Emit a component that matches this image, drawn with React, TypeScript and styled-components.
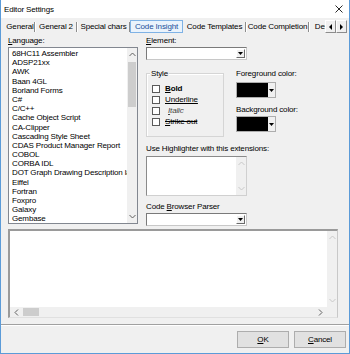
import type { FC, ReactNode } from 'react';
import styled, { createGlobalStyle, css } from 'styled-components';

const GlobalStyle = createGlobalStyle`
  html, body {
    margin: 0;
    padding: 0;
    background: #f0f0f0;
  }
  body {
    font-family: "Liberation Sans", Arial, sans-serif;
    font-size: 8px;
    letter-spacing: -0.15px;
    color: #000;
  }
`;

const languages = [
  '68HC11 Assembler',
  'ADSP21xx',
  'AWK',
  'Baan 4GL',
  'Borland Forms',
  'C#',
  'C/C++',
  'Cache Object Script',
  'CA-Clipper',
  'Cascading Style Sheet',
  'CDAS Product Manager Report',
  'COBOL',
  'CORBA IDL',
  'DOT Graph Drawing Description language',
  'Eiffel',
  'Fortran',
  'Foxpro',
  'Galaxy',
  'Gembase',
];

const tabs = [
  { label: 'General', width: 30 },
  { label: 'General 2', width: 42 },
  { label: 'Special chars', width: 53 },
  { label: 'Code Insight', width: 53, active: true },
  { label: 'Code Templates', width: 63 },
  { label: 'Code Completion', width: 63 },
  { label: 'Desktop', width: 40 },
];

type Dir = 'up' | 'down' | 'left' | 'right';

const chevronPoints: Record<Dir, string> = {
  up: '0.5,4 3.5,1 6.5,4',
  down: '0.5,1 3.5,4 6.5,1',
  left: '4,0.5 1,3.5 4,6.5',
  right: '1,0.5 4,3.5 1,6.5',
};

const Chevron: FC<{ readonly dir: Dir; readonly disabled?: boolean }> = ({
  dir,
  disabled = false,
}) => {
  const horizontal = dir === 'left' || dir === 'right';
  return (
    <svg
      width={horizontal ? 5 : 7}
      height={horizontal ? 7 : 5}
      viewBox={horizontal ? '0 0 5 7' : '0 0 7 5'}
    >
      <polyline
        points={chevronPoints[dir]}
        fill="none"
        stroke={disabled ? '#c8c8c8' : '#606060'}
        strokeWidth={1}
      />
    </svg>
  );
};

const Triangle: FC<{ readonly dir: 'down' | 'left' | 'right' }> = ({ dir }) => {
  const pts = { down: '0,0 5,0 2.5,3', left: '3,0 3,6 0,3', right: '0,0 0,6 3,3' }[dir];
  return (
    <svg width={dir === 'down' ? 5 : 3} height={dir === 'down' ? 3 : 6}>
      <polygon points={pts} fill="#000" />
    </svg>
  );
};

const VScrollBar: FC<{ readonly disabled?: boolean; readonly thumb?: boolean }> = ({
  disabled = false,
  thumb = false,
}) => (
  <VScroll>
    <ArrowCell>
      <Chevron dir="up" disabled={disabled} />
    </ArrowCell>
    <Track>{thumb && <VThumb />}</Track>
    <ArrowCell>
      <Chevron dir="down" disabled={disabled} />
    </ArrowCell>
  </VScroll>
);

const ComboBox: FC<{ readonly width: number }> = ({ width }) => (
  <Combo style={{ width }}>
    <ComboField />
    <DropButton>
      <Triangle dir="down" />
    </DropButton>
  </Combo>
);

const ColorPicker: FC = () => (
  <ColorButton>
    <Swatch />
    <ColorArrow>
      <Triangle dir="down" />
    </ColorArrow>
  </ColorButton>
);

const CheckRow: FC<{ readonly children: ReactNode }> = ({ children }) => (
  <CheckLine>
    <CheckBox />
    {children}
  </CheckLine>
);

export default function App() {
  return (
    <>
      <GlobalStyle />
      <Window>
        <TitleBar>
          <Title>Editor Settings</Title>
          <svg width="8" height="8" viewBox="0 0 8 8">
            <path d="M0.5 0.5 L7.5 7.5 M7.5 0.5 L0.5 7.5" stroke="#111" strokeWidth="0.9" />
          </svg>
        </TitleBar>

        <TabStrip>
          <TabList>
            {tabs.map((t) => (
              <Tab key={t.label} $width={t.width} $active={!!t.active}>
                {t.label}
              </Tab>
            ))}
          </TabList>
          <TabArrows>
            <TabArrow>
              <Triangle dir="left" />
            </TabArrow>
            <TabArrow>
              <Triangle dir="right" />
            </TabArrow>
          </TabArrows>
        </TabStrip>

        <Page>
          <TopSection>
            <LeftColumn>
              <Label>
                <Key>L</Key>anguage:
              </Label>
              <ListBox>
                <ListItems>
                  {languages.map((l) => (
                    <ListItem key={l}>{l}</ListItem>
                  ))}
                </ListItems>
                <VScrollBar thumb />
              </ListBox>
            </LeftColumn>

            <RightColumn>
              <Label>
                <Key>E</Key>lement:
              </Label>
              <ComboBox width={101} />

              <StyleRow>
                <GroupBox>
                  <Legend>Style</Legend>
                  <CheckRow>
                    <CheckText $variant="bold">
                      <Key>B</Key>old
                    </CheckText>
                  </CheckRow>
                  <CheckRow>
                    <CheckText $variant="underline">Underline</CheckText>
                  </CheckRow>
                  <CheckRow>
                    <CheckText $variant="italic">
                      <Key>I</Key>talic
                    </CheckText>
                  </CheckRow>
                  <CheckRow>
                    <CheckText $variant="strike">
                      <Key>S</Key>trike out
                    </CheckText>
                  </CheckRow>
                </GroupBox>

                <ColorColumn>
                  <ColorLabel>Foreground color:</ColorLabel>
                  <ColorPicker />
                  <ColorLabel $gap={7}>Background color:</ColorLabel>
                  <ColorPicker />
                </ColorColumn>
              </StyleRow>

              <Label $gap={7}>Use Highlighter with this extensions:</Label>
              <SmallMemo>
                <MemoArea />
                <VScrollBar disabled />
              </SmallMemo>

              <Label $gap={6}>
                Code <Key>B</Key>rowser Parser
              </Label>
              <ComboBox width={101} />
            </RightColumn>
          </TopSection>

          <BigMemo>
            <BigMemoMain>
              <MemoArea />
              <VScrollBar disabled />
            </BigMemoMain>
            <HScroll>
              <HArrowCell>
                <Chevron dir="left" />
              </HArrowCell>
              <HTrack>
                <HThumb />
              </HTrack>
              <HArrowCell>
                <Chevron dir="right" />
              </HArrowCell>
              <Corner />
            </HScroll>
          </BigMemo>
        </Page>

        <Separator />

        <ButtonBar>
          <Button>
            <Key>O</Key>K
          </Button>
          <Button>
            <Key>C</Key>ancel
          </Button>
        </ButtonBar>
      </Window>
    </>
  );
}

const Window = styled.div`
  box-sizing: border-box;
  width: 350px;
  height: 354px;
  overflow: hidden;
  border: 1px solid #5b9bd8;
  border-top: none;
  display: flex;
  flex-direction: column;
  background: #f0f0f0;
`;

const TitleBar = styled.div`
  height: 18px;
  flex-shrink: 0;
  background: #fff;
  display: flex;
  align-items: center;
  justify-content: space-between;
  padding: 0 6px 0 3px;
`;

const Title = styled.span`
  font-size: 8px;
  color: #000;
`;

const TabStrip = styled.div`
  display: flex;
  align-items: center;
  height: 13px;
  margin-top: 2px;
  padding-left: 4px;
`;

const TabList = styled.div`
  display: flex;
  width: 320px;
  height: 13px;
  overflow: hidden;
`;

const Tab = styled.div<{ readonly $width: number; readonly $active: boolean }>`
  box-sizing: border-box;
  flex-shrink: 0;
  width: ${({ $width }) => $width}px;
  height: 13px;
  line-height: 11px;
  text-align: center;
  white-space: nowrap;
  position: relative;
  border: 1px solid transparent;

  &::after {
    content: '';
    position: absolute;
    right: -1px;
    top: 1px;
    bottom: 0;
    width: 1px;
    background: #8c8c8c;
    box-shadow: 1px 0 0 #fff;
  }

  ${({ $active }) =>
    $active &&
    css`
      border-color: #7fb2e5;
      background: #eaf3fc;
      color: #1b4f9a;
      &::after {
        display: none;
      }
    `}
`;

const TabArrows = styled.div`
  display: flex;
`;

const TabArrow = styled.div`
  box-sizing: border-box;
  width: 11px;
  height: 13px;
  display: flex;
  align-items: center;
  justify-content: center;
  background: #f0f0f0;
  border: 1px solid;
  border-color: #fff #8c8c8c #8c8c8c #fff;
`;

const Page = styled.div`
  padding: 0 0 0 7px;
  display: flex;
  flex-direction: column;
`;

const TopSection = styled.div`
  display: flex;
`;

const LeftColumn = styled.div`
  width: 130px;
  display: flex;
  flex-direction: column;
`;

const RightColumn = styled.div`
  margin-left: 8px;
  display: flex;
  flex-direction: column;
`;

const Label = styled.div<{ readonly $gap?: number }>`
  height: 11px;
  line-height: 10px;
  margin-top: ${({ $gap = 3 }) => $gap}px;
  white-space: nowrap;
`;

const Key = styled.span`
  text-decoration: underline;
`;

const ListBox = styled.div`
  box-sizing: border-box;
  width: 130px;
  height: 177px;
  border: 1px solid #828790;
  background: #fff;
  display: flex;
`;

const ListItems = styled.div`
  flex: 1;
  min-width: 0;
  overflow: hidden;
  padding: 1px 0 0 3px;
`;

const ListItem = styled.div`
  height: 9.2px;
  line-height: 9.2px;
  white-space: nowrap;
`;

const VScroll = styled.div`
  width: 10px;
  flex-shrink: 0;
  background: #f0f0f0;
  display: flex;
  flex-direction: column;
`;

const ArrowCell = styled.div`
  height: 13px;
  flex-shrink: 0;
  display: flex;
  align-items: center;
  justify-content: center;
`;

const Track = styled.div`
  flex: 1;
  padding: 1px 1px 0;
`;

const VThumb = styled.div`
  height: 45px;
  background: #cdcdcd;
`;

const Combo = styled.div`
  box-sizing: border-box;
  height: 13px;
  display: flex;
  background: #fff;
  border: 1px solid;
  border-color: #7a7a7a #c8c8c8 #c8c8c8 #7a7a7a;
  padding: 1px 1px 1px 0;
`;

const ComboField = styled.div`
  flex: 1;
`;

const DropButton = styled.div`
  box-sizing: border-box;
  width: 9px;
  display: flex;
  align-items: center;
  justify-content: center;
  background: #f0f0f0;
  border: 1px solid;
  border-color: #fff #6a6a6a #6a6a6a #fff;
`;

const StyleRow = styled.div`
  display: flex;
  margin-top: 9px;
`;

const GroupBox = styled.div`
  box-sizing: border-box;
  width: 78px;
  height: 64px;
  margin-top: 4px;
  border: 1px solid #d5d5d5;
  box-shadow: inset 1px 1px 0 #fff;
  padding: 0 0 0 5px;
`;

const Legend = styled.div`
  display: inline-block;
  margin: -4px 0 0 -2px;
  padding: 0 1px;
  height: 8px;
  line-height: 8px;
  background: #f0f0f0;
  vertical-align: top;
`;

const CheckLine = styled.div`
  display: flex;
  align-items: center;
  height: 11px;
  gap: 5px;
`;

const CheckBox = styled.div`
  box-sizing: border-box;
  width: 8px;
  height: 8px;
  background: #fff;
  border: 1px solid #5a5a5a;
`;

const CheckText = styled.span<{ readonly $variant: 'bold' | 'underline' | 'italic' | 'strike' }>`
  white-space: nowrap;
  ${({ $variant }) =>
    ({
      bold: css`
        font-weight: bold;
      `,
      underline: css`
        text-decoration: underline;
      `,
      italic: css`
        font-style: italic;
        color: #444;
        padding-left: 3px;
      `,
      strike: css`
        text-decoration: line-through;
      `,
    })[$variant]}
`;

const ColorColumn = styled.div`
  margin-left: 12px;
  display: flex;
  flex-direction: column;
`;

const ColorLabel = styled.div<{ readonly $gap?: number }>`
  height: 10px;
  line-height: 10px;
  margin-top: ${({ $gap = 0 }) => $gap}px;
  margin-bottom: ${({ $gap = 0 }) => ($gap ? 1 : 3)}px;
  white-space: nowrap;
`;

const ColorButton = styled.div`
  box-sizing: border-box;
  width: 40px;
  height: 16px;
  display: flex;
  border: 1px solid #adadad;
  background: #f0f0f0;
`;

const Swatch = styled.div`
  width: 31px;
  background: #000;
`;

const ColorArrow = styled.div`
  flex: 1;
  display: flex;
  align-items: center;
  justify-content: center;
`;

const SmallMemo = styled.div`
  box-sizing: border-box;
  width: 101px;
  height: 40px;
  margin-top: 1px;
  display: flex;
  background: #fff;
  border: 1px solid;
  border-color: #8a8a8a #d0d0d0 #d0d0d0 #8a8a8a;
`;

const MemoArea = styled.div`
  flex: 1;
  background: #fff;
`;

const BigMemo = styled.div`
  box-sizing: border-box;
  width: 330px;
  height: 89px;
  margin-top: 3px;
  display: flex;
  flex-direction: column;
  background: #fff;
  border-style: solid;
  border-width: 2px 1px 1px 2px;
  border-color: #9a9a9a #c8c8c8 #e0e0e0 #9a9a9a;
`;

const BigMemoMain = styled.div`
  flex: 1;
  display: flex;
`;

const HScroll = styled.div`
  height: 10px;
  display: flex;
  background: #f0f0f0;
`;

const HArrowCell = styled.div`
  width: 13px;
  display: flex;
  align-items: center;
  justify-content: center;
`;

const HTrack = styled.div`
  flex: 1;
  padding: 1px 0;
`;

const HThumb = styled.div`
  width: 16px;
  height: 100%;
  background: #cdcdcd;
`;

const Corner = styled.div`
  width: 10px;
  background: #f0f0f0;
`;

const Separator = styled.div`
  margin-top: 6px;
  height: 1px;
  background: #a0a0a0;
  box-shadow: 0 1px 0 #fff;
`;

const ButtonBar = styled.div`
  display: flex;
  justify-content: flex-end;
  gap: 5px;
  padding-right: 3px;
  margin-top: 6px;
`;

const Button = styled.div`
  box-sizing: border-box;
  width: 52px;
  height: 17px;
  display: flex;
  align-items: center;
  justify-content: center;
  background: #e1e1e1;
  border: 1px solid #adadad;
`;
